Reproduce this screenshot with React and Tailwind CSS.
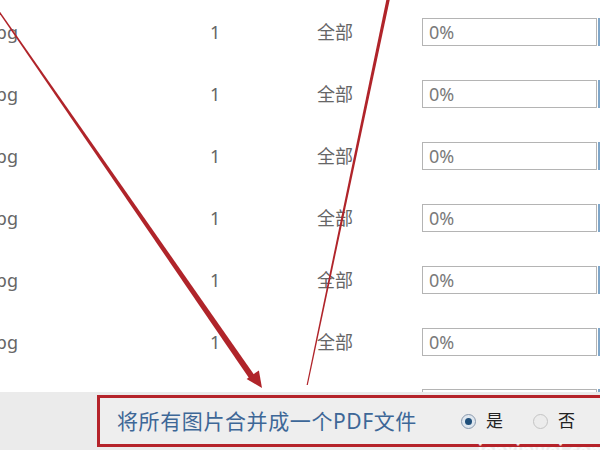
import React from 'react';

const rows = ['001.jpg', '002.jpg', '003.jpg', '004.jpg', '005.jpg', '006.jpg'];

const font = { fontFamily: '"Noto Sans", "Noto Sans CJK SC", sans-serif' };

const Input = () => (
    <div className="flex items-center shrink-0">
        <div className="w-[175px] h-[28px] border-[1.5px] border-[#b4b4b4] bg-white flex items-center pl-[6px] text-[#7a7a7a]">
            0%
        </div>
        <div className="w-[12px] h-[28px] ml-[1px] border-l-[2px] border-[#7fa6c9] bg-[#e6f0f8]" />
    </div>
);

const Row = ({ name }) => (
    <div className="flex items-center h-[62px] shrink-0 text-[18px] text-[#666]">
        <div className="w-[210px] shrink-0">
            <div className="w-[18px] flex justify-end whitespace-nowrap">{name}</div>
        </div>
        <div className="w-[107px] shrink-0">1</div>
        <div className="w-[105px] shrink-0">全部</div>
        <Input />
    </div>
);

const Radio = ({ checked, label }) => (
    <div className="flex items-center">
        {checked ? (
            <div className="w-[15px] h-[15px] rounded-full border border-[#8a9aae] bg-[#dfe7ef] flex items-center justify-center">
                <div className="w-[7px] h-[7px] rounded-full bg-[#1f4f7a]" />
            </div>
        ) : (
            <div className="w-[15px] h-[15px] rounded-full border border-[#c4c4c4] bg-[#ececec]" />
        )}
        <span className="ml-[10px] text-[17px] text-[#222]">{label}</span>
    </div>
);

export default function App() {
    return (
        <div className="relative w-[600px] h-[450px] overflow-hidden bg-white flex flex-col" style={font}>
            {/* table */}
            <div className="flex-1 overflow-hidden flex flex-col pt-px">
                {rows.map(r => <Row key={r} name={r} />)}
                {/* next row, only the top edge of its input shows above the footer */}
                <div className="flex items-start shrink-0 pl-[422px] pt-[16px] text-[18px]">
                    <Input />
                </div>
            </div>

            {/* footer */}
            <div className="h-[58px] shrink-0 bg-[#ebebeb] pt-[3px] pl-[97px] overflow-hidden">
                <div className="w-[540px] h-[52px] border-[3px] border-[#b5232a] flex items-center pl-[17px] bg-[#eeeeee]">
                    <span className="text-[21px] tracking-[0.6px] text-[#3d6797] whitespace-nowrap leading-none">将所有图片合并成一个PDF文件</span>
                    <div className="ml-[44px] flex items-center gap-[30px]">
                        <Radio checked label="是" />
                        <Radio label="否" />
                    </div>
                </div>
            </div>

            {/* watermark */}
            <div className="absolute right-[-6px] bottom-[-13px] text-[17px] font-bold text-white/80 tracking-wide">jenxinwei.com</div>

            {/* annotation arrows */}
            <svg className="absolute inset-0 pointer-events-none" width="600" height="450">
                <polygon points="-9.7,0 -8.3,0 255,376 250,379.5" fill="#b0242a" />
                <polygon points="262,388 246.6,378.9 258.9,370.4" fill="#b0242a" />
                <polygon points="386.3,0 389.7,0 307.8,385 306.6,385" fill="#b0242a" />
            </svg>
        </div>
    );
}
